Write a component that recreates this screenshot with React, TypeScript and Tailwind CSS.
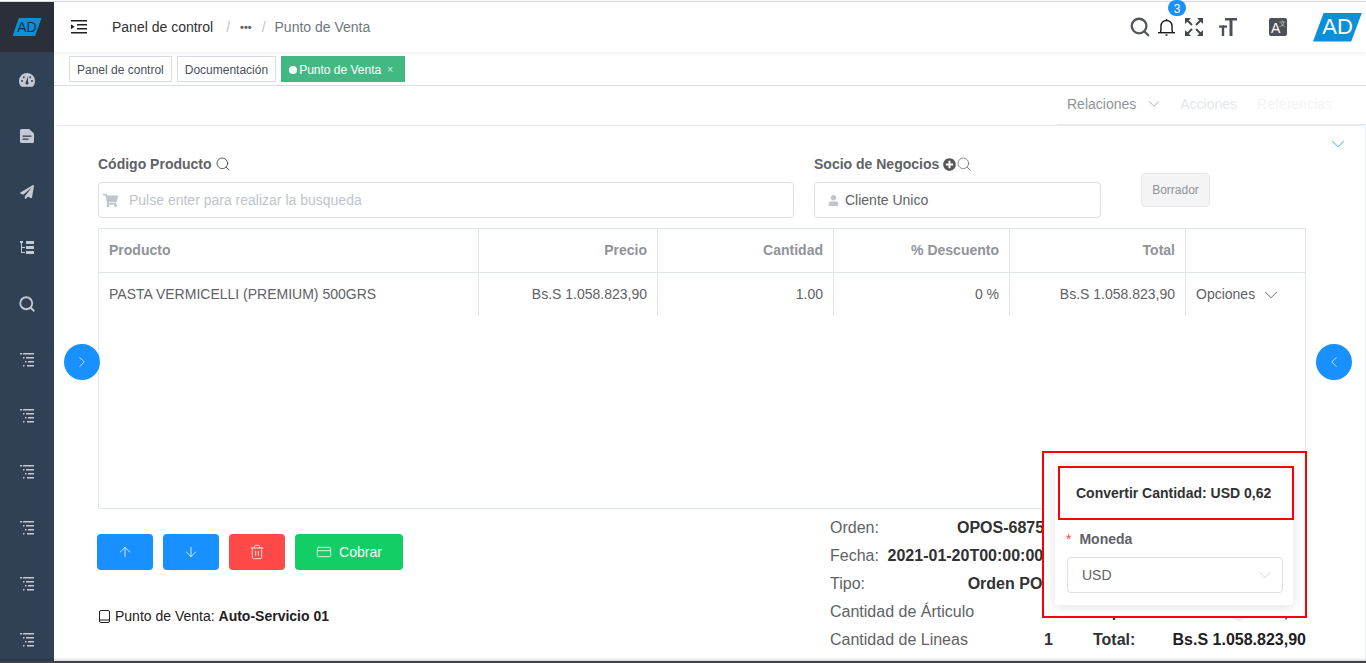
import { ArrowDown, ArrowUp, ChevronDown, ChevronLeft, ChevronRight, CreditCard, Search, Trash2 } from "lucide-react";
import { FaPaperPlane, FaPlusCircle, FaShoppingCart, FaUser } from "react-icons/fa";

function GaugeIcon() {
  return (
    <svg width="16" height="14" viewBox="0 0 16 14" fill="currentColor">
      <path d="M8 0a8 8 0 0 0-8 8c0 2 .7 4 2 5.200.4.400.8.600 1.300.600h9.400c.5 0 .9-.2 1.300-.6C15.300 12 16 10 16 8a8 8 0 0 0-8-8z" />
      <circle cx="3" cy="8" r="1" fill="#304156" />
      <circle cx="4.800" cy="4.300" r="1" fill="#304156" />
      <circle cx="13" cy="8" r="1" fill="#304156" />
      <circle cx="11.200" cy="4.300" r="1" fill="#304156" />
      <path d="M9 3l-2 6h2z" fill="#304156" />
      <circle cx="8" cy="10" r="1.600" fill="#304156" />
    </svg>
  );
}

function DocIcon() {
  return (
    <svg width="14" height="14" viewBox="0 0 14 14" fill="currentColor">
      <path d="M1.500 0H9l5 4.500V12.500A1.500 1.500 0 0 1 12.500 14h-11A1.500 1.500 0 0 1 0 12.500v-11A1.500 1.500 0 0 1 1.500 0z" />
      <rect x="2.500" y="6.500" width="9" height="1.300" fill="#304156" />
      <rect x="2.500" y="9.500" width="6" height="1.300" fill="#304156" />
    </svg>
  );
}

function TreeTableIcon() {
  return (
    <svg width="14" height="14" viewBox="0 0 14 14" fill="currentColor">
      <rect x="0" y="0" width="3" height="2" />
      <rect x="6" y="0" width="8" height="3" />
      <rect x="6" y="5" width="8" height="3" />
      <rect x="6" y="10" width="8" height="3" />
      <rect x="1" y="2" width="1" height="10" />
      <rect x="1" y="6" width="4" height="1" />
      <rect x="1" y="11" width="4" height="1" />
    </svg>
  );
}

function NestedListIcon() {
  return (
    <svg width="14" height="14" viewBox="0 0 14 14" fill="currentColor">
      <rect x="0" y="0" width="2" height="1.500" />
      <rect x="3" y="0" width="11" height="1.500" />
      <rect x="3" y="4" width="1.500" height="1.500" />
      <rect x="6" y="4" width="8" height="1.500" />
      <rect x="5" y="8" width="1.500" height="1.500" />
      <rect x="8" y="8" width="6" height="1.500" />
      <rect x="3" y="12" width="1.500" height="1.500" />
      <rect x="7" y="12" width="7" height="1.500" />
    </svg>
  );
}

function HamburgerIcon() {
  return (
    <svg width="16" height="14" viewBox="0 0 16 14" fill="#1f2023">
      <rect x="0" y="0" width="16" height="1.500" />
      <rect x="6" y="4" width="10" height="1.500" />
      <rect x="6" y="8" width="10" height="1.500" />
      <rect x="0" y="12" width="16" height="1.500" />
      <path d="M0 4.300l3.500 2.500L0 9.300z" />
    </svg>
  );
}

function BellIcon() {
  return (
    <svg width="17" height="18" viewBox="0 0 17 18" fill="none" stroke="#1c1c1c" strokeWidth="1.400">
      <path d="M2.500 14.500C3 13 3 10 3 8a5.500 5.500 0 0 1 11 0c0 2 0 5 .5 6.500" />
      <path d="M8.500 1v1.500" />
      <path d="M0 14.700h17" />
      <path d="M7.500 17h2" />
    </svg>
  );
}

function FullscreenIcon() {
  return (
    <svg width="18" height="18" viewBox="0 0 18 18" fill="#444950" stroke="#444950">
      <path d="M0 0h6L0 6z" strokeWidth="0" />
      <path d="M2.500 2.500L7 7" strokeWidth="2" />
      <path d="M18 0h-6l6 6z" strokeWidth="0" />
      <path d="M15.500 2.500L11 7" strokeWidth="2" />
      <path d="M0 18h6l-6-6z" strokeWidth="0" />
      <path d="M2.500 15.500L7 11" strokeWidth="2" />
      <path d="M18 18h-6l6-6z" strokeWidth="0" />
      <path d="M15.500 15.500L11 11" strokeWidth="2" />
    </svg>
  );
}

function TextSizeIcon() {
  return (
    <svg width="18" height="18" viewBox="0 0 18 18" fill="#4d5157">
      <rect x="6" y="0" width="12" height="2.500" />
      <rect x="10.500" y="0" width="3" height="18" />
      <rect x="0" y="7.500" width="8" height="2.200" />
      <rect x="2.800" y="7.500" width="2.400" height="10.500" />
    </svg>
  );
}

function DeviceIcon() {
  return (
    <svg width="14" height="14" viewBox="0 0 14 14" fill="none" stroke="#1f2023" strokeWidth="1">
      <rect x="2.500" y="0.500" width="10" height="12" rx="1.500" />
      <path d="M2.500 10h10" />
    </svg>
  );
}

function LanguageIcon() {
  return (
    <div className="relative flex h-[18px] w-[18px] items-center rounded-[2px] bg-[#4d5157] pl-[2px] pt-[2px] text-[14px] leading-none text-white">
      A<span className="absolute right-[1px] top-[2px] text-[7px] leading-none text-[#c9cbce]">文</span>
    </div>
  );
}

function Logo({ big }: { big?: boolean }) {
  return (
    <div
      className={`flex items-center justify-center bg-[#0b8fd8] leading-none ${
        big
          ? "h-[29px] w-[49px] text-[22px] text-white [clip-path:polygon(22%_0,100%_0,78%_100%,0_100%)]"
          : "h-[18px] w-[29px] text-[14px] text-[#15304a] [clip-path:polygon(22%_0,100%_0,78%_100%,0_100%)]"
      }`}
    >
      AD
    </div>
  );
}

const MENU = [
  <GaugeIcon key="gauge" />,
  <DocIcon key="doc" />,
  <FaPaperPlane key="plane" size={14} />,
  <TreeTableIcon key="tree" />,
  <Search key="search" size={18} strokeWidth={2.400} />,
  <NestedListIcon key="a" />,
  <NestedListIcon key="b" />,
  <NestedListIcon key="c" />,
  <NestedListIcon key="d" />,
  <NestedListIcon key="e" />,
  <NestedListIcon key="f" />,
];

const COLUMNS = ["Producto", "Precio", "Cantidad", "% Descuento", "Total", ""];
const ROW = ["PASTA VERMICELLI (PREMIUM) 500GRS", "Bs.S 1.058.823,90", "1.00", "0 %", "Bs.S 1.058.823,90"];

const SUMMARY = [
  { label: "Orden:", value: "OPOS-68751" },
  { label: "Fecha:", value: "2021-01-20T00:00:00Z" },
  { label: "Tipo:", value: "Orden POS" },
  { label: "Cantidad de Árticulo", value: "1", sideLabel: "Impuesto:", sideValue: "Bs.S 0,00" },
  { label: "Cantidad de Lineas", value: "1", sideLabel: "Total:", sideValue: "Bs.S 1.058.823,90" },
];

function Sidebar() {
  return (
    <aside className="flex w-[54px] shrink-0 flex-col bg-[#304156] text-[#c3cad3]">
      <div className="flex h-[50px] shrink-0 items-center justify-center bg-[#2b2f3a]">
        <Logo />
      </div>
      {MENU.map((icon, i) => (
        <div key={i} className="flex h-[56px] shrink-0 items-center justify-center">
          {icon}
        </div>
      ))}
    </aside>
  );
}

function Header() {
  return (
    <header className="relative z-10 flex h-[50px] shrink-0 items-center bg-white pl-[17px] pr-[4px] shadow-[0_1px_4px_rgba(0,21,41,0.08)]">
      <HamburgerIcon />
      <span className="ml-[25px] text-[14px] text-[#303133]">Panel de control</span>
      <span className="ml-[13px] text-[14px] text-[#c0c4cc]">/</span>
      <span className="ml-[10px] text-[11px] font-bold leading-none text-[#606266]">•••</span>
      <span className="ml-[10px] text-[14px] text-[#c0c4cc]">/</span>
      <span className="ml-[9px] text-[14px] text-[#71757c]">Punto de Venta</span>
      <div className="ml-auto flex items-center">
        <Search size={22} strokeWidth={2.500} className="text-[#53575c]" />
        <div className="relative ml-[7px] flex">
          <BellIcon />
          <span className="absolute left-[10px] top-[-18px] flex h-[16px] w-[18px] items-center justify-center rounded-full bg-[#1890ff] pt-px text-[12px] text-white">
            3
          </span>
        </div>
        <div className="ml-[10px] flex">
          <FullscreenIcon />
        </div>
        <div className="ml-[16px] flex">
          <TextSizeIcon />
        </div>
        <div className="ml-[32px]">
          <LanguageIcon />
        </div>
        <div className="ml-[26px]">
          <Logo big />
        </div>
      </div>
    </header>
  );
}

function TagBar() {
  return (
    <div className="flex h-[34px] shrink-0 items-center gap-[5px] border-b border-[#d8dce5] bg-white pl-[15px]">
      <span className="flex h-[26px] items-center border border-[#d8dce5] px-[7px] pt-[2px] text-[12px] text-[#495060]">Panel de control</span>
      <span className="flex h-[26px] items-center border border-[#d8dce5] px-[7px] pt-[2px] text-[12px] text-[#495060]">Documentación</span>
      <span className="flex h-[26px] items-center bg-[#42b983] pl-[8px] pr-[12px] pt-[2px] text-[12px] text-white">
        <span className="mr-[2px] h-[8px] w-[8px] rounded-full bg-white" />
        Punto de Venta
        <span className="ml-[6px] text-[10px] text-[#d4f0e3]">×</span>
      </span>
    </div>
  );
}

function Tabs() {
  return (
    <div className="flex h-[39px] shrink-0 justify-end">
      <div className="flex w-[309px] items-center border-b border-[#e6e6e6] pb-[2px] pl-[10px] text-[14px]">
        <span className="text-[#909399]">Relaciones</span>
        <ChevronDown size={18} strokeWidth={1} className="ml-[9px] text-[#909399]" />
        <span className="ml-[17px] text-[#e4e7ed]">Acciones</span>
        <span className="ml-[20px] text-[#f3f4f6]">Referencias</span>
      </div>
    </div>
  );
}

function FilterFields() {
  return (
    <div className="flex items-start">
      <div className="w-[696px]">
        <div className="flex h-[16px] items-center gap-[3px] text-[14px] font-bold text-[#606266]">
          Código Producto
          <Search size={16} strokeWidth={1.200} className="text-[#303133]" />
        </div>
        <div className="mt-[10px] flex h-[36px] items-center rounded-[4px] border border-[#dcdfe6] pl-[4px] text-[14px] text-[#c0c4cc]">
          <FaShoppingCart size={15} />
          <span className="ml-[11px]">Pulse enter para realizar la busqueda</span>
        </div>
      </div>
      <div className="ml-[20px] w-[287px]">
        <div className="flex h-[16px] items-center gap-[4px] text-[14px] font-bold text-[#606266]">
          Socio de Negocios
          <span className="flex items-center">
            <FaPlusCircle size={13} className="text-[#555]" />
            <Search size={16} strokeWidth={1.100} className="text-[#606266]" />
          </span>
        </div>
        <div className="mt-[10px] flex h-[36px] items-center rounded-[4px] border border-[#dcdfe6] pl-[13px] text-[14px] text-[#606266]">
          <FaUser size={11} className="text-[#c0c4cc]" />
          <span className="ml-[6px]">Cliente Unico</span>
        </div>
      </div>
      <button className="ml-[40px] mt-[17px] h-[34px] w-[69px] rounded-[4px] border border-[#e4e7ed] bg-[#f4f4f5] text-[12px] text-[#909399]">
        Borrador
      </button>
    </div>
  );
}

function ProductTable() {
  return (
    <div className="mt-[10px] h-[281px] border border-[#dfe6ec]">
      <div className="grid h-[44px] grid-cols-[380px_179px_176px_176px_176px_1fr] border-b border-[#dfe6ec] text-[14px] font-bold text-[#909399]">
        {COLUMNS.map((col, i) => (
          <div
            key={i}
            className={`flex items-center px-[10px] ${i === 0 ? "" : "justify-end"} ${i === 5 ? "" : "border-r border-[#dfe6ec]"}`}
          >
            {col}
          </div>
        ))}
      </div>
      <div className="grid h-[43px] grid-cols-[380px_179px_176px_176px_176px_1fr] text-[14px] text-[#606266]">
        {ROW.map((cell, i) => (
          <div key={i} className={`flex items-center border-r border-[#dfe6ec] px-[10px] ${i === 0 ? "" : "justify-end"}`}>
            {cell}
          </div>
        ))}
        <div className="flex items-center pl-[10px]">
          Opciones
          <ChevronDown size={22} strokeWidth={1} className="ml-[5px]" />
        </div>
      </div>
    </div>
  );
}

function Actions() {
  return (
    <div className="ml-[-1px] pt-[25px]">
      <div className="flex gap-[10px] text-white">
        <button className="flex h-[36px] w-[56px] items-center justify-center rounded-[4px] bg-[#1890ff]">
          <ArrowUp size={16} strokeWidth={1.200} />
        </button>
        <button className="flex h-[36px] w-[56px] items-center justify-center rounded-[4px] bg-[#1890ff]">
          <ArrowDown size={16} strokeWidth={1.200} />
        </button>
        <button className="flex h-[36px] w-[56px] items-center justify-center rounded-[4px] bg-[#ff4949]">
          <Trash2 size={16} strokeWidth={1.200} />
        </button>
        <button className="flex h-[36px] w-[108px] items-center justify-center gap-[7px] rounded-[4px] bg-[#13ce66] text-[14px]">
          <CreditCard size={16} strokeWidth={1.200} />
          Cobrar
        </button>
      </div>
      <div className="mt-[36px] flex items-center gap-[4px] text-[14px] text-[#1f2023]">
        <DeviceIcon />
        <span>
          Punto de Venta: <b>Auto-Servicio 01</b>
        </span>
      </div>
    </div>
  );
}

function Summary() {
  return (
    <div className="mt-[5px] w-[476px] text-[16px] text-[#606266]">
      {SUMMARY.map((row) => (
        <div key={row.label} className="flex h-[28px] items-center">
          <span className="flex w-[223px] justify-between">
            <span>{row.label}</span>
            <b className="text-[#303133]">{row.value}</b>
          </span>
          {row.sideLabel && (
            <span className="flex flex-1 justify-between pl-[40px] font-bold text-[#1f2023]">
              <span className="text-[#303133]">{row.sideLabel}</span>
              <span>{row.sideValue}</span>
            </span>
          )}
        </div>
      ))}
    </div>
  );
}

function ConvertPopover() {
  return (
    <div className="absolute left-[1042px] top-[451px] h-[167px] w-[265px] border-2 border-[#ff0000] bg-white">
      <div className="ml-[11px] mt-[12px] h-[140px] w-[238px] rounded-[4px] bg-white pt-px shadow-[0_2px_12px_rgba(0,0,0,0.12)]">
        <div className="ml-[3px] flex h-[54px] w-[236px] items-center border-2 border-[#ff0000] pl-[16px] text-[14px] font-bold text-[#303133]">
          Convertir Cantidad: USD 0,62
        </div>
        <div className="ml-[11px] mt-[10px] flex h-[18px] items-center text-[14px] font-bold text-[#606266]">
          <span className="mr-[8px] font-normal text-[#ff4949]">*</span>
          Moneda
        </div>
        <div className="ml-[12px] mt-[9px] flex h-[36px] w-[216px] items-center justify-between rounded-[4px] border border-[#dcdfe6] pl-[14px] pr-[7px] text-[14px] text-[#606266]">
          USD
          <ChevronDown size={20} strokeWidth={0.900} className="text-[#c0c4cc]" />
        </div>
      </div>
      <span className="absolute left-[189px] top-[165px] h-0 w-0 border-x-[6px] border-t-[4px] border-x-transparent border-t-[#eef0f4]" />
    </div>
  );
}

export default function App() {
  return (
    <div className="relative h-[663px] w-[1366px] overflow-hidden bg-white font-['Liberation_Sans',sans-serif]">
      <div className="h-[2px] border-b border-[#d8dce5]" />
      <div className="flex h-[659px]">
        <Sidebar />
        <main className="flex min-w-0 flex-1 flex-col">
          <Header />
          <TagBar />
          <Tabs />
          <section className="ml-px flex min-h-0 flex-1 rounded-t-[4px] border-r border-t border-[#e6ebf5] pl-[43px] pt-[30px]">
            <div className="w-[1208px] shrink-0">
              <FilterFields />
              <ProductTable />
              <div className="flex justify-between">
                <Actions />
                <Summary />
              </div>
            </div>
            <ChevronDown size={22} strokeWidth={0.900} className="ml-[21px] mt-[-23px] text-[#1890ff]" />
          </section>
        </main>
      </div>
      <div className="relative h-[2px] bg-[#3f4347] shadow-[0_-1px_3px_rgba(0,0,0,0.25)]" />

      <button className="absolute left-[64px] top-[344px] flex h-[36px] w-[36px] items-center justify-center rounded-full bg-[#1890ff] text-white">
        <ChevronRight size={18} strokeWidth={1} />
      </button>
      <button className="absolute left-[1316px] top-[344px] flex h-[36px] w-[36px] items-center justify-center rounded-full bg-[#1890ff] text-white">
        <ChevronLeft size={18} strokeWidth={1} />
      </button>
      <ConvertPopover />
    </div>
  );
}
